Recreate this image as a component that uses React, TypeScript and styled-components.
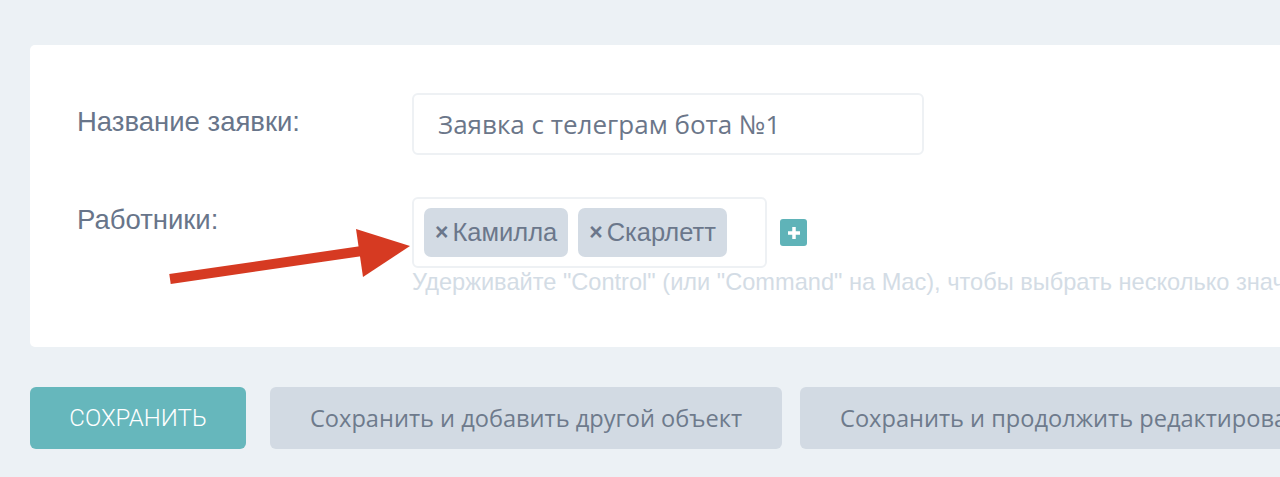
import React from 'react';
import styled, { createGlobalStyle } from 'styled-components';

const GlobalStyle = createGlobalStyle`
  html, body {
    margin: 0;
    padding: 0;
    background: #ecf1f5;
    overflow: hidden;
  }
`;

const workers = ['Камилла', 'Скарлетт'];

const Arrow = () => (
  <ArrowSvg width="260" height="75" viewBox="160 215 260 75">
    <line x1="170" y1="279" x2="362" y2="251" stroke="#d63a22" strokeWidth="10" />
    <polygon points="356,229 410,246 363,277" fill="#d63a22" />
  </ArrowSvg>
);

const App = () => {
  return (
    <Page>
      <GlobalStyle />
      <Card>
        <Row>
          <Label $offset={13}>Название заявки:</Label>
          <Field>
            <TextInput>Заявка с телеграм бота №1</TextInput>
          </Field>
        </Row>
        <Row $gap={42}>
          <Label $offset={7}>Работники:</Label>
          <Field>
            <SelectLine>
              <SelectBox>
                {workers.map((name) => (
                  <Chip key={name}>
                    <Remove>×</Remove>
                    {name}
                  </Chip>
                ))}
              </SelectBox>
              <AddButton>
                <svg width="16" height="16" viewBox="0 0 16 16">
                  <path d="M8 2v12M2 8h12" stroke="#fff" strokeWidth="3.5" />
                </svg>
              </AddButton>
            </SelectLine>
            <Help>
              Удерживайте "Control" (или "Command" на Mac), чтобы выбрать несколько значений.
            </Help>
          </Field>
        </Row>
        <Arrow />
      </Card>
      <Actions>
        <SaveButton>Сохранить</SaveButton>
        <SecondaryButton $gap={24}>Сохранить и добавить другой объект</SecondaryButton>
        <SecondaryButton $gap={18}>Сохранить и продолжить редактирование</SecondaryButton>
      </Actions>
    </Page>
  );
};

const Page = styled.div`
  width: 1280px;
  height: 477px;
  padding: 45px 0 0 30px;
  box-sizing: border-box;
  overflow: hidden;
`;
const Card = styled.div`
  position: relative;
  width: 1300px;
  height: 302px;
  box-sizing: border-box;
  padding: 48px 0 0 47px;
  background: #fff;
  border-radius: 5px;
`;
const Row = styled.div<{ $gap?: number }>`
  display: grid;
  grid-template-columns: 335px 1fr;
  margin-top: ${(p) => p.$gap ?? 0}px;
`;
const Label = styled.div<{ $offset: number }>`
  font-family: 'Liberation Sans', Arial, sans-serif;
  font-size: 27.5px;
  color: #68758a;
  padding-top: ${(p) => p.$offset}px;
`;
const Field = styled.div`
  display: flex;
  flex-direction: column;
`;
const TextInput = styled.div`
  width: 512px;
  height: 62px;
  box-sizing: border-box;
  border: 2px solid #eef1f4;
  border-radius: 6px;
  padding: 0 24px;
  display: flex;
  align-items: center;
  font-family: 'Open Sans', sans-serif;
  font-size: 26px;
  color: #6b7689;
`;
const SelectLine = styled.div`
  display: flex;
  align-items: center;
`;
const SelectBox = styled.div`
  width: 355px;
  height: 71px;
  box-sizing: border-box;
  border: 2px solid #eef1f4;
  border-radius: 6px;
  padding: 0 10px;
  display: flex;
  align-items: center;
  gap: 10px;
`;
const Chip = styled.div`
  height: 49px;
  padding: 0 11px;
  display: flex;
  align-items: center;
  border-radius: 7px;
  background: #d3dbe4;
  font-family: 'Liberation Sans', Arial, sans-serif;
  font-size: 25.5px;
  color: #6b778b;
`;
const Remove = styled.span`
  font-weight: bold;
  font-size: 23px;
  margin-right: 4px;
`;
const AddButton = styled.div`
  width: 27px;
  height: 27px;
  margin-left: 13px;
  border-radius: 3px;
  background: #5fb3b8;
  display: flex;
  align-items: center;
  justify-content: center;
`;
const Help = styled.div`
  margin-top: 1px;
  font-family: 'Liberation Sans', Arial, sans-serif;
  font-size: 23.6px;
  color: #d3dce5;
  white-space: nowrap;
`;
const ArrowSvg = styled.svg`
  position: absolute;
  left: 130px;
  top: 170px;
`;
const Actions = styled.div`
  display: flex;
  margin-top: 40px;
  white-space: nowrap;
`;
const SaveButton = styled.div`
  flex: none;
  width: 216px;
  height: 62px;
  border-radius: 6px;
  background: #66b7bc;
  display: flex;
  align-items: center;
  justify-content: center;
  font-family: Roboto, sans-serif;
  font-weight: 300;
  font-size: 24px;
  text-transform: uppercase;
  color: #fff;
`;
const SecondaryButton = styled.div<{ $gap: number }>`
  flex: none;
  height: 62px;
  margin-left: ${(p) => p.$gap}px;
  padding: 0 40px;
  border-radius: 6px;
  background: #d2dae3;
  display: flex;
  align-items: center;
  font-family: 'Open Sans', sans-serif;
  font-size: 23.6px;
  color: #6e7a8c;
`;

export default App;
